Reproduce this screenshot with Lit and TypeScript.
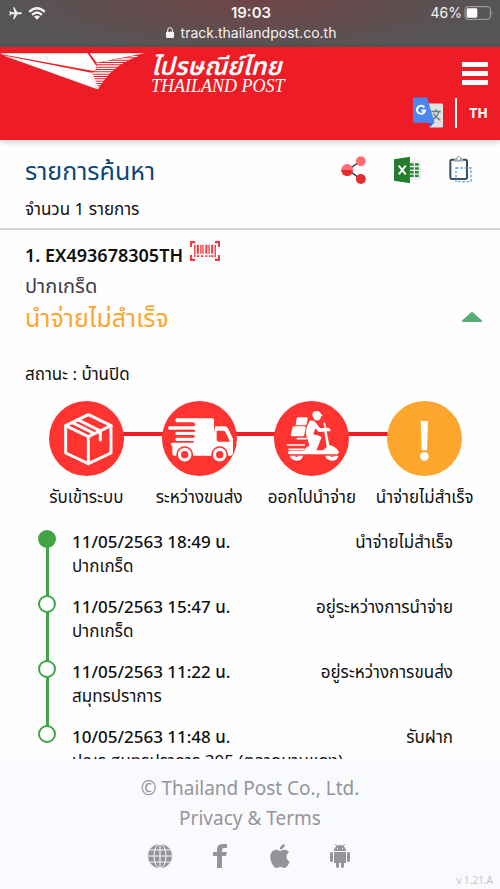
import { LitElement, html, css, svg } from "lit";
import { customElement, state } from "lit/decorators.js";
import { classMap } from "lit/directives/class-map.js";

const planeIcon = html`<svg class="plane" viewBox="0 0 24 24" aria-hidden="true"><path fill="currentColor" transform="rotate(90 12 12)" d="M21 16v-2l-8-5V3.500c0-.83-.67-1.500-1.500-1.500S10 2.670 10 3.500V9l-8 5v2l8-2.500V19l-2 1.500V22l3.500-1 3.500 1v-1.500L13 19v-5.500l8 2.500z"/></svg>`;
const wifiIcon = html`<svg class="wifi" viewBox="0 0 54 40" aria-hidden="true"><g fill="none" stroke="currentColor" stroke-width="7"><path d="M3 15Q27 -7 51 15"/><path d="M12 24Q27 10 42 24"/></g><path fill="currentColor" d="M18 30Q27 22 36 30L27 39z"/></svg>`;
const lockIcon = html`<svg class="lock" viewBox="0 0 24 33" aria-hidden="true"><rect y="14" width="24" height="19" rx="3" fill="currentColor"/><path d="M5 16V9a7 7 0 0 1 14 0v7" fill="none" stroke="currentColor" stroke-width="3"/></svg>`;
const batteryIcon = html`<svg class="battery" viewBox="0 0 88 42" role="img" aria-label="Battery"><rect x="2" y="2" width="76" height="38" rx="9" fill="none" stroke="#aaa" stroke-width="3"/><rect x="7" y="7" width="32" height="28" rx="4" fill="#fff"/><path d="M82 14q5 7 0 14z" fill="#aaa"/></svg>`;

const birdLogo = html`<svg class="bird" viewBox="0 0 435 114" aria-hidden="true">
  <defs><clipPath id="tail"><path d="M290 33L432 6Q356 32 325 70Q303 96 294 112L276 62L290 52z"/></clipPath></defs>
  <g fill="#fff"><path d="M2 4H263L289 42Q292 52 280 57L5 7z"/><path d="M8 10L267 61L292 112z"/><path d="M269 4H434L290 32z"/></g>
  <g clip-path="url(#tail)" stroke="#fff" stroke-width="4">${[14, 21, 28, 35, 42, 49, 56, 63, 70, 77, 84, 91, 98, 105].map((y) => svg`<path d="M270 ${y}H432"/>`)}</g>
  <path d="M267 61L276 62L296 112H292z" fill="#fff"/></svg>`;

const menuIcon = html`<svg class="menu-icon" viewBox="0 0 26 23" aria-hidden="true"><path fill="#fff" d="M0 0h26v5H0zM0 9h26v5H0zM0 18h26v5H0z"/></svg>`;
const translateIcon = html`<svg class="translate-icon" viewBox="0 0 90 90" aria-hidden="true">
  <path d="M40 18H86a4 4 0 0 1 4 4V86a4 4 0 0 1-4 4H50z" fill="#dfe1e3"/>
  <path d="M46 75H64L50 90z" fill="#3167cf"/>
  <path d="M55 42H83M69 35v7M78 42Q73 58 57 68M61 48Q68 61 82 68" stroke="#607d78" stroke-width="4" fill="none"/>
  <path d="M4 0H42L65 76H4a4 4 0 0 1-4-4V4a4 4 0 0 1 4-4z" fill="#4a86ee"/>
  <path d="M34 30A12 12 0 1 0 36 39H25" stroke="#fff" stroke-width="6" fill="none"/></svg>`;

const shareIcon = html`<svg class="tool-icon" viewBox="0 0 84 90" aria-hidden="true"><path d="M64 16L22 45L64 74" fill="none" stroke="#37505a" stroke-width="5"/><circle cx="64" cy="17" r="16" fill="#ff6e73"/><circle cx="64" cy="74" r="16" fill="#e52c30"/><circle cx="20" cy="45" r="19" fill="#ff6e73"/><path d="M1 45a19 19 0 0 0 38 0z" fill="#e52c30"/></svg>`;
const excelIcon = html`<svg class="tool-icon" viewBox="0 0 88 84" aria-hidden="true"><rect x="48" y="11" width="38" height="62" rx="3" fill="#eef0f1"/><path fill="#2e8636" d="M50 21h12v8H50zM66 21h12v8H66zM50 33h12v8H50zM66 33h12v8H66zM50 45h12v8H50zM66 45h12v8H66zM50 57h12v7H50zM66 57h12v7H66z"/><path d="M0 8L50 0V84L0 76z" fill="#267d2e"/><path d="M15 28L37 56M37 28L15 56" stroke="#fff" stroke-width="6"/></svg>`;
const clipIcon = html`<svg class="tool-icon" viewBox="-2 0 84 84" aria-hidden="true"><rect x="5" y="11" width="50" height="58" rx="5" fill="none" stroke="#3d4f5c" stroke-width="6"/><path d="M17 8h26v9H17z" fill="#a7b1b7"/><circle cx="30" cy="8" r="6" fill="#fff" stroke="#87949c" stroke-width="3"/><rect x="22" y="36" width="45" height="41" fill="none" stroke="#5aa5de" stroke-width="4" stroke-dasharray="8 5"/></svg>`;
const barcodeIcon = html`<svg class="barcode-icon" viewBox="0 0 88 58" aria-hidden="true"><g fill="none" stroke="#ee3a40"><path d="M15 3H3V17M73 3H85V17M15 55H3V41M73 55H85V41" stroke-width="6"/><path d="M14 11V47M74 11V47M32 11V37M38 11V37M56 11V37" stroke-width="4"/><path d="M23 11V37M48 11V37M65 11V37" stroke-width="6"/><path d="M20 44h7M32 44h7M45 44h6M55 44h5M62 44h7" stroke-width="5"/></g></svg>`;

const boxArt = svg`<g fill="none" stroke="#fff" stroke-width="9" stroke-linejoin="round" stroke-linecap="round"><path d="M118 41L186 74V156L118 188L50 156V74z"/><path d="M50 74L118 107L186 74M118 107V188M86 56L154 90V117M70 65L136 98"/></g>`;
const truckArt = svg`<path fill="#fff" d="M43 52H150q6 0 6 6V164H37q-6 0-6-6V134H28q-4-9 5-9H95V120H43q-6-6 0-10H95V102H43q-6-6 0-10H95V86H21q-6-6 0-10H95V64H43q-6-7 0-12z"/>
  <path fill="#ff3431" d="M44 66H97q6 4 0 8H44zM44 86H97q6 3 0 6H44zM44 104H97q6 3 0 5H44z"/>
  <path fill="#fff" fill-rule="evenodd" d="M160 76H190q6 2 9 8L213 113V157q0 7-7 7H150V114zM164 89V117Q166 122 172 122H204L190 92Q187 89 184 89z"/>
  <g fill="#fff" stroke="#ff3431" stroke-width="5"><circle cx="68" cy="161" r="23"/><circle cx="173" cy="161" r="23"/></g><g fill="#ff3431"><circle cx="68" cy="161" r="11"/><circle cx="173" cy="161" r="11"/></g>`;
const scooterArt = svg`<g fill="#fff"><path d="M71 49h26q5 0 4 5l-3 15q-1 4-5 4H67q-3 0-2-4l3-16q1-4 3-4zM59 76h32q5 0 4 5l-4 20q-1 5-5 5H54q-4 0-3-5l4-20q1-5 4-5z"/>
  <path d="M115 42Q115 30 129 30Q139 31 141 40L147 44L141 46Q140 59 129 59Q118 57 115 42z"/>
  <path d="M107 60Q119 56 126 66L138 82L163 80L169 84V91H158L166 132Q187 136 195 153Q194 160 187 160H48Q41 160 42 153L45 149H91Q95 137 106 134L100 112Q92 100 99 76z"/></g>
  <path fill="#ff3431" d="M124 82L134 93L151 92L158 139L147 148H127L142 111Q141 104 132 104L117 102z"/>
  <path d="M107 104L132 111L121 143" fill="none" stroke="#fff" stroke-width="14" stroke-linejoin="round"/>
  <path d="M70 113H96M40 132H91M45 145H90M151 67L155 83" fill="none" stroke="#fff" stroke-width="5" stroke-linecap="round"/>
  <path d="M43 137H90" stroke="#ff3431" stroke-width="3"/>
  <g fill="#fff"><path d="M48 164H87Q84 179 68 179Q51 178 48 164zM154 164H193Q190 179 174 179Q157 178 154 164z"/></g><g fill="#ff3431"><path d="M61 164H74Q68 171 61 164zM167 164H181Q174 171 167 164z"/></g>`;
const alertArt = svg`<path fill="#fff" d="M101 60h22l-3 88h-16z"/><circle cx="112" cy="166" r="13" fill="#fff"/>`;

const globeIcon = html`<svg class="foot-icon" viewBox="0 0 24 24" aria-hidden="true"><circle cx="12" cy="12" r="12" fill="currentColor"/><g fill="none" stroke="#f9fafd"><path d="M12 0V24M0 12H24M2 6H22M2 18H22"/><ellipse cx="12" cy="12" rx="6" ry="12"/></g></svg>`;
const facebookIcon = html`<svg class="foot-icon" viewBox="0 0 24 24" aria-hidden="true"><path fill="currentColor" d="M19 0V4H16Q14 4 14 6V8H19L18 12H14V24H9V12H5V8H9V5Q9 0 15 0z"/></svg>`;
const appleIcon = html`<svg class="foot-icon" viewBox="2 2 20 20" aria-hidden="true"><path fill="currentColor" d="M18.710,19.500C17.880,20.740 17,21.950 15.660,21.970C14.320,22 13.890,21.180 12.370,21.180C10.840,21.180 10.370,21.950 9.100,22C7.790,22.050 6.800,20.680 5.960,19.470C4.250,17 2.940,12.450 4.700,9.390C5.570,7.870 7.130,6.910 8.820,6.880C10.100,6.860 11.320,7.750 12.110,7.750C12.890,7.750 14.370,6.680 15.920,6.840C16.570,6.870 18.390,7.100 19.560,8.820C19.470,8.880 17.390,10.100 17.410,12.630C17.440,15.650 20.060,16.660 20.090,16.670C20.060,16.740 19.670,18.110 18.710,19.500M13,3.500C13.730,2.670 14.940,2.040 15.940,2C16.070,3.170 15.600,4.350 14.900,5.190C14.210,6.040 13.070,6.700 11.950,6.610C11.800,5.460 12.360,4.260 13,3.500Z"/></svg>`;
const androidIcon = html`<svg class="foot-icon" viewBox="0 0 24 24" aria-hidden="true"><path fill="currentColor" d="M6 18c0 .55.45 1 1 1h1v3.500c0 .83.67 1.500 1.500 1.500s1.500-.67 1.500-1.500V19h2v3.500c0 .83.67 1.500 1.500 1.500s1.500-.67 1.500-1.500V19h1c.55 0 1-.45 1-1V8H6v10zM3.500 8C2.670 8 2 8.670 2 9.500v7c0 .83.67 1.500 1.500 1.500S5 17.330 5 16.500v-7C5 8.670 4.330 8 3.500 8zm17 0c-.83 0-1.500.67-1.500 1.500v7c0 .83.67 1.500 1.500 1.500s1.500-.67 1.500-1.500v-7c0-.83-.67-1.500-1.500-1.500zm-4.970-5.840l1.300-1.300c.2-.2.2-.51 0-.71-.2-.2-.51-.2-.71 0l-1.480 1.480C13.850 1.230 12.950 1 12 1c-.96 0-1.860.23-2.660.63L7.850.15c-.2-.2-.51-.2-.71 0-.2.2-.2.51 0 .71l1.310 1.310C6.970 3.260 6 5.010 6 7h12c0-1.990-.97-3.750-2.470-4.840zM10 5H9V4h1v1zm5 0h-1V4h1v1z"/></svg>`;

const steps = [
  { label: "รับเข้าระบบ", art: boxArt, alert: false },
  { label: "ระหว่างขนส่ง", art: truckArt, alert: false },
  { label: "ออกไปนำจ่าย", art: scooterArt, alert: false },
  { label: "นำจ่ายไม่สำเร็จ", art: alertArt, alert: true },
];

const events = [
  { time: "11/05/2563 18:49 น.", place: "ปากเกร็ด", status: "นำจ่ายไม่สำเร็จ" },
  { time: "11/05/2563 15:47 น.", place: "ปากเกร็ด", status: "อยู่ระหว่างการนำจ่าย" },
  { time: "11/05/2563 11:22 น.", place: "สมุทรปราการ", status: "อยู่ระหว่างการขนส่ง" },
  { time: "10/05/2563 11:48 น.", place: "ปณร.สมุทรปราการ 305 (ตลาดบานแดง)", status: "รับฝาก" },
];

@customElement("app-root")
export class AppRoot extends LitElement {
  @state() private open = true;

  static styles = css`
    :host { display: flex; flex-direction: column; height: 100vh; overflow: hidden; background: #fefefe; color: #111; font-family: "Noto Sans", "Noto Sans Thai", sans-serif; font-size: 17px; line-height: 24px; }
    * { box-sizing: border-box; }
    svg { display: block; }
    h1, h2, h3, p, ol, ul { margin: 0; padding: 0; font-weight: 400; }
    ol, ul { list-style: none; }
    button { margin: 0; padding: 0; border: 0; background: none; color: inherit; font: inherit; cursor: pointer; }
    a { color: inherit; text-decoration: none; }

    .phone { flex: none; padding: 3px 6px 5px 8px; color: #f4f4f4; background: radial-gradient(ellipse 50% 120% at 50% 0, #704446, transparent), #555556; font-family: Inter, sans-serif; }
    .phone-row { display: grid; grid-template-columns: 1fr auto 1fr; align-items: center; line-height: 20px; }
    .signal { display: flex; align-items: center; gap: 5px; }
    .plane { width: 15px; height: 15px; }
    .wifi { width: 18px; height: 13px; }
    .clock { font-size: 15px; font-weight: 600; }
    .power { display: flex; justify-content: flex-end; align-items: center; gap: 2px; font-size: 14px; }
    .battery { width: 30px; height: 14px; }
    .address { display: flex; justify-content: center; align-items: center; gap: 7px; font-size: 14px; line-height: 19px; }
    .lock { width: 8px; height: 11px; }

    .header { position: relative; flex: none; display: flex; justify-content: space-between; padding: 5px 12px 12px 0; background: #ee1c25; color: #fff; box-shadow: 0 2px 6px rgba(0, 0, 0, 0.2); }
    .brand { display: flex; gap: 6px; align-self: flex-start; }
    .bird { width: 145px; height: 38px; }
    .wordmark { font-style: italic; }
    .word-th { display: block; font-size: 25px; font-weight: 600; line-height: 26px; }
    .word-en { display: block; font-family: "Liberation Serif", serif; font-size: 18px; font-weight: 400; line-height: 16px; white-space: nowrap; }
    .actions { display: flex; flex-direction: column; align-items: flex-end; gap: 12px; padding-top: 10px; }
    .menu-icon { width: 26px; height: 23px; }
    .langs { display: flex; align-items: center; }
    .translate-icon { width: 30px; height: 31px; }
    .lang { margin-left: 12px; padding-left: 12px; border-left: 2px solid #fff; font-family: "Open Sans", sans-serif; font-size: 14px; font-weight: 700; line-height: 30px; }

    .content { flex: 1; min-height: 0; overflow: hidden; }
    .search-head { padding: 12px 24px 7px 25px; border-bottom: 2px solid #d4d4d4; }
    .title-row { display: flex; justify-content: space-between; align-items: center; }
    .title { color: #0d4778; font-size: 25px; line-height: 36px; }
    .tools { display: flex; gap: 26px; }
    .tool-icon { width: 28px; height: 28px; }
    .count { padding-top: 9px; }

    .parcel { padding: 11px 18px 0 25px; }
    .number-row { display: flex; gap: 7px; align-items: center; }
    .number { font-weight: 600; font-size: 18px; line-height: 28px; }
    .barcode-icon { width: 30px; height: 28px; padding-bottom: 8px; }
    .place { color: #3d3a4c; font-size: 20px; line-height: 34px; }
    .state-row { display: flex; justify-content: space-between; align-items: center; }
    .state { color: #fca62e; font-size: 25px; line-height: 28px; }
    .chevron { width: 20px; height: 12px; transition: transform 0.2s; }
    .closed { transform: rotate(180deg); }
    .reason { padding-top: 31px; }

    .steps { display: flex; margin: 15px 1px 0 5px; }
    .step { flex: 1; position: relative; display: flex; flex-direction: column; align-items: center; gap: 9px; white-space: nowrap; }
    .step + .step::before { content: ""; position: absolute; top: 31px; right: 50%; width: 100%; height: 4px; background: #ee1c25; }
    .disc { position: relative; z-index: 1; width: 75px; height: 75px; border-radius: 50%; background: #ff3431; }
    .alert { background: #fca62e; }

    .timeline { padding: 21px 29px 0 13px; }
    .event { position: relative; display: flex; gap: 16px; padding-bottom: 17px; }
    .event + .event::before { content: ""; position: absolute; left: 8px; top: -48px; width: 3px; height: 49px; background: #43a447; }
    .dot { flex: none; width: 18px; height: 18px; border: 2px solid #43a447; border-radius: 50%; }
    .current { background: #43a447; }
    .entry { flex: 1; min-width: 0; }
    .entry-head { display: flex; justify-content: space-between; }
    .time { font-weight: 500; }

    .footer { flex: none; position: relative; padding: 14px 0 21px; background: #f9fafd; color: #969498; font-size: 19px; line-height: 30px; text-align: center; }
    .links { display: flex; justify-content: center; gap: 36px; padding-top: 11px; }
    .foot-icon { width: 24px; height: 24px; }
    .version { position: absolute; right: 7px; bottom: 0; color: #c4c4ca; font-size: 10px; line-height: 18px; }
  `;

  render() {
    return html`
      <div class="phone">
        <div class="phone-row">
          <div class="signal">${planeIcon}${wifiIcon}</div>
          <time class="clock">19:03</time>
          <div class="power"><span>46%</span>${batteryIcon}</div>
        </div>
        <div class="address">${lockIcon}<span>track.thailandpost.co.th</span></div>
      </div>
      <header class="header">
        <a class="brand" href="#">${birdLogo}<h1 class="wordmark"><span class="word-th">ไปรษณีย์ไทย</span><span class="word-en">THAILAND POST</span></h1></a>
        <div class="actions">
          <button aria-label="Menu">${menuIcon}</button>
          <div class="langs"><button aria-label="Translate">${translateIcon}</button><button class="lang">TH</button></div>
        </div>
      </header>
      <main class="content">
        <section class="search-head">
          <div class="title-row">
            <h2 class="title">รายการค้นหา</h2>
            <div class="tools">
              <button aria-label="Share">${shareIcon}</button>
              <button aria-label="Excel">${excelIcon}</button>
              <button aria-label="Copy">${clipIcon}</button>
            </div>
          </div>
          <p class="count">จำนวน 1 รายการ</p>
        </section>
        <section class="parcel">
          <div class="number-row"><h3 class="number">1. EX493678305TH</h3><button aria-label="Barcode">${barcodeIcon}</button></div>
          <p class="place">ปากเกร็ด</p>
          <div class="state-row">
            <p class="state">นำจ่ายไม่สำเร็จ</p>
            <button aria-label="Details" aria-expanded=${this.open} @click=${() => (this.open = !this.open)}>
              <svg class=${classMap({ chevron: true, closed: !this.open })} viewBox="0 0 20 12" aria-hidden="true"><path d="M1 10L10 2L19 10z" fill="#57ad74" stroke="#57ad74" stroke-width="2" stroke-linejoin="round"/></svg>
            </button>
          </div>
          ${this.open ? this.renderDetails() : null}
        </section>
      </main>
      <footer class="footer">
        <p>© Thailand Post Co., Ltd.</p>
        <p><a href="#">Privacy &amp; Terms</a></p>
        <nav class="links">
          <a href="#" aria-label="Website">${globeIcon}</a><a href="#" aria-label="Facebook">${facebookIcon}</a>
          <a href="#" aria-label="App Store">${appleIcon}</a><a href="#" aria-label="Android">${androidIcon}</a>
        </nav>
        <span class="version">v 1.21.A</span>
      </footer>
    `;
  }

  private renderDetails() {
    return html`
      <p class="reason">สถานะ : บ้านปิด</p>
      <ol class="steps">
        ${steps.map((s) => html`<li class="step"><svg class=${classMap({ disc: true, alert: s.alert })} viewBox="0 0 225 225" aria-hidden="true">${s.art}</svg><span>${s.label}</span></li>`)}
      </ol>
      <ol class="timeline">
        ${events.map((e, i) => html`<li class="event">
          <span class=${classMap({ dot: true, current: i === 0 })}></span>
          <div class="entry"><div class="entry-head"><time class="time">${e.time}</time><span>${e.status}</span></div><p>${e.place}</p></div>
        </li>`)}
      </ol>
    `;
  }
}
